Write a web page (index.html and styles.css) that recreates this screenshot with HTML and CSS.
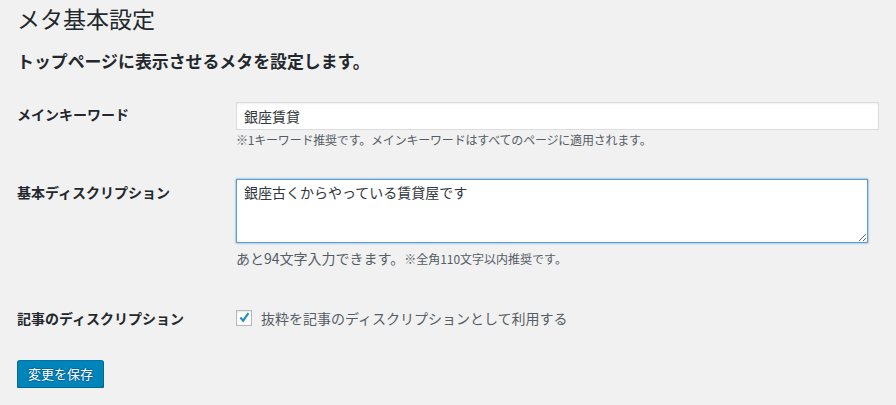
FILE: index.html
```html
<!DOCTYPE html>
<html lang="ja">
<head>
<meta charset="utf-8">
<title>メタ基本設定</title>
<link rel="stylesheet" href="styles.css">
</head>
<body>
<div class="wrap">
  <h1 class="title">メタ基本設定</h1>
  <h2 class="lead">トップページに表示させるメタを設定します。</h2>
  <div class="form">
    <div class="row">
      <div class="label">メインキーワード</div>
      <div class="field">
        <input class="text-input" type="text" value="銀座賃貸">
        <p class="desc">※1キーワード推奨です。メインキーワードはすべてのページに適用されます。</p>
      </div>
    </div>
    <div class="row">
      <div class="label label-area">基本ディスクリプション</div>
      <div class="field">
        <textarea class="textarea is-focus">銀座古くからやっている賃貸屋です</textarea>
        <p class="count">あと94文字入力できます。<span class="count-note">※全角110文字以内推奨です。</span></p>
      </div>
    </div>
    <div class="row row-check">
      <div class="label label-check">記事のディスクリプション</div>
      <div class="field">
        <label class="check-label">
          <span class="checkbox"><svg viewBox="0 0 16 16" width="16" height="16"><path d="M3.6 8.2 L5.2 6.7 L7 9.1 L11.6 2.6 L13.3 3.8 L7.2 12.4 Z" fill="#1e8cbe"/></svg></span>
          <span>抜粋を記事のディスクリプションとして利用する</span>
        </label>
      </div>
    </div>
  </div>
  <button class="btn-primary" type="button">変更を保存</button>
</div>
</body>
</html>
```

FILE: styles.css
```css
html, body {
  margin: 0;
  padding: 0;
  background: #f1f1f1;
}
body {
  font-family: "Noto Sans CJK JP", "Noto Sans", sans-serif;
  color: #23282d;
  font-size: 14px;
}
.wrap {
  padding: 0 17px;
}
.title {
  margin: 3px 0 0;
  font-size: 23px;
  font-weight: 400;
  line-height: 30px;
  color: #23282d;
}
.lead {
  margin: 16px 0 0;
  font-size: 16.9px;
  font-weight: 700;
  line-height: 24px;
  color: #23282d;
}
.form {
  margin-top: 14px;
}
.row {
  display: grid;
  grid-template-columns: 219px 1fr;
  padding: 15px 0;
}
.label {
  font-size: 14px;
  font-weight: 700;
  line-height: 20px;
  padding-top: 2px;
  color: #23282d;
}
.label-area {
  padding-top: 3px;
}
.label-check {
  padding-top: 0;
}
.row-check {
  padding-top: 24px;
}
.field {
  min-width: 0;
}
.text-input {
  display: block;
  box-sizing: border-box;
  width: 643px;
  height: 28px;
  margin: 0;
  padding: 2px 7px;
  border: 1px solid #ddd;
  background: #fff;
  box-shadow: inset 0 1px 2px rgba(0,0,0,.07);
  font-family: inherit;
  font-size: 14px;
  color: #32373c;
  outline: none;
}
.desc {
  margin: 1px 0 0;
  font-size: 12px;
  line-height: 18px;
  color: #555d66;
  letter-spacing: -0.2px;
}
.textarea {
  display: block;
  box-sizing: border-box;
  width: 632px;
  height: 64px;
  margin: 0;
  padding: 2px 7px;
  border: 1px solid #ddd;
  background: #fff;
  font-family: inherit;
  font-size: 14px;
  line-height: 20px;
  color: #32373c;
  outline: none;
  resize: both;
}
.textarea.is-focus {
  border-color: #5b9dd9;
  box-shadow: 0 0 2px rgba(30,140,190,.8);
}
.count {
  margin: 5px 0 0;
  font-size: 14px;
  line-height: 20px;
  color: #555d66;
}
.count-note {
  font-size: 12px;
}
.check-label {
  display: flex;
  align-items: center;
  gap: 9px;
  font-size: 14px;
  line-height: 20px;
  color: #555d66;
}
.checkbox {
  display: flex;
  box-sizing: border-box;
  width: 16px;
  height: 16px;
  border: 1px solid #b4b9be;
  background: #fff;
  box-shadow: inset 0 1px 2px rgba(0,0,0,.1);
  align-items: center;
  justify-content: center;
}
.checkbox svg {
  flex: none;
}
.btn-primary {
  display: block;
  margin-top: 17px;
  height: 28px;
  padding: 0 10px;
  box-sizing: border-box;
  border: 1px solid #0073aa;
  border-color: #0073aa #006799 #006799;
  border-radius: 3px;
  background: #0085ba;
  box-shadow: 0 1px 0 #006799;
  color: #fff;
  font-family: inherit;
  font-size: 13px;
  line-height: 26px;
  text-shadow: 0 -1px 1px #006799, 1px 0 1px #006799, 0 1px 1px #006799, -1px 0 1px #006799;
  cursor: pointer;
}
```
